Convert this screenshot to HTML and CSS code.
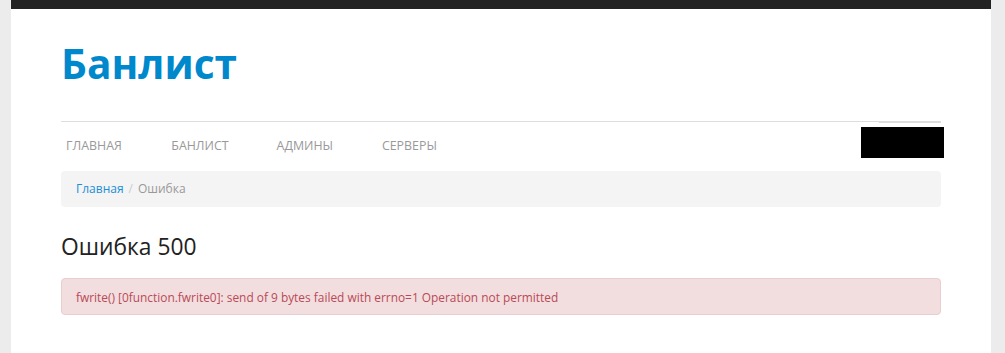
FILE: index.html
```html
<!DOCTYPE html>
<html lang="ru">
<head>
<meta charset="utf-8">
<title>Банлист</title>
<link rel="stylesheet" href="styles.css">
</head>
<body>
<div class="page">
  <div class="title">Банлист</div>
  <div class="nav">
    <a class="nav-item" href="#">Главная</a>
    <a class="nav-item" href="#">Банлист</a>
    <a class="nav-item" href="#">Админы</a>
    <a class="nav-item" href="#">Серверы</a>
    <div class="nav-right">
      <span class="nav-right-line"></span>
      <div class="blackbox"></div>
    </div>
  </div>
  <div class="breadcrumb">
    <a href="#" class="crumb-link">Главная</a><span class="crumb-sep">/</span><span class="crumb-active">Ошибка</span>
  </div>
  <h3 class="heading">Ошибка 500</h3>
  <div class="alert">fwrite() [0function.fwrite0]: send of 9 bytes failed with errno=1 Operation not permitted</div>
</div>
</body>
</html>
```
FILE: styles.css
```css
html, body {
  margin: 0;
  padding: 0;
}
body {
  background: #ececec;
  font-family: "Open Sans", "Noto Sans", "DejaVu Sans", sans-serif;
}
.page {
  box-sizing: border-box;
  width: 980px;
  min-height: 100vh;
  margin-left: 11px;
  padding: 30px 50px 20px;
  background: #fff;
  border-top: 9px solid #222;
}
.title {
  font-size: 40.6px;
  font-weight: 700;
  line-height: 50px;
  color: #0088cc;
  margin: 0 0 32px;
}
.nav {
  display: flex;
  align-items: flex-start;
  border-top: 1px solid #ddd;
}
.nav-item {
  width: 105.3px;
  box-sizing: border-box;
  padding: 14px 0 15px 5px;
  font-size: 12.4px;
  line-height: 20px;
  color: #999;
  text-transform: uppercase;
  text-decoration: none;
}
.nav-right {
  margin-left: auto;
  position: relative;
}
.nav-right-line {
  position: absolute;
  left: 18px;
  top: -1px;
  width: 62px;
  height: 2px;
  background: #ddd;
}
.blackbox {
  width: 83px;
  height: 31px;
  margin-top: 5px;
  margin-right: -3px;
  background: #000;
}
.breadcrumb {
  background: #f4f4f4;
  border-radius: 4px;
  padding: 9px 15px;
  font-size: 12px;
  line-height: 18px;
}
.crumb-link {
  color: #1a8fd6;
  text-decoration: none;
}
.crumb-sep {
  color: #ccc;
  padding: 0 5px;
}
.crumb-active {
  color: #999;
}
.heading {
  margin: 25px 0 17px;
  font-size: 22.8px;
  line-height: 29px;
  font-weight: 400;
  color: #222;
}
.alert {
  background: #f2dede;
  border: 1px solid #ebccd1;
  border-radius: 4px;
  padding: 9px 14px 8px;
  font-size: 11.9px;
  line-height: 18px;
  color: #b94a58;
}
```
